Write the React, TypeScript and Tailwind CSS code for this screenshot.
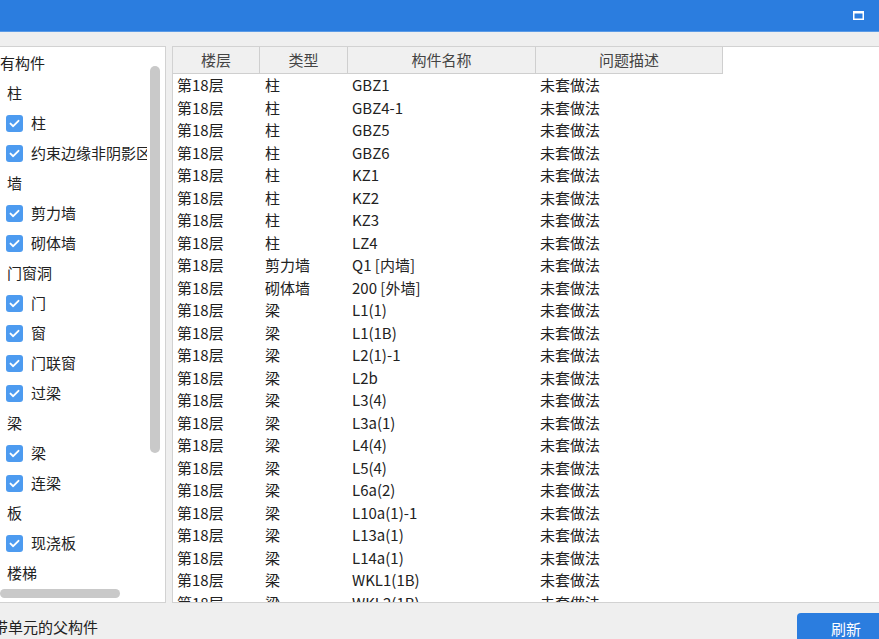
import React from "react";

type TreeItem = { label: string; checked?: boolean };

const treeItems: TreeItem[] = [
  { label: "有构件" },
  { label: "柱" },
  { label: "柱", checked: true },
  { label: "约束边缘非阴影区", checked: true },
  { label: "墙" },
  { label: "剪力墙", checked: true },
  { label: "砌体墙", checked: true },
  { label: "门窗洞" },
  { label: "门", checked: true },
  { label: "窗", checked: true },
  { label: "门联窗", checked: true },
  { label: "过梁", checked: true },
  { label: "梁" },
  { label: "梁", checked: true },
  { label: "连梁", checked: true },
  { label: "板" },
  { label: "现浇板", checked: true },
  { label: "楼梯" },
];

const rows: [string, string][] = [
  ["柱", "GBZ1"],
  ["柱", "GBZ4-1"],
  ["柱", "GBZ5"],
  ["柱", "GBZ6"],
  ["柱", "KZ1"],
  ["柱", "KZ2"],
  ["柱", "KZ3"],
  ["柱", "LZ4"],
  ["剪力墙", "Q1 [内墙]"],
  ["砌体墙", "200 [外墙]"],
  ["梁", "L1(1)"],
  ["梁", "L1(1B)"],
  ["梁", "L2(1)-1"],
  ["梁", "L2b"],
  ["梁", "L3(4)"],
  ["梁", "L3a(1)"],
  ["梁", "L4(4)"],
  ["梁", "L5(4)"],
  ["梁", "L6a(2)"],
  ["梁", "L10a(1)-1"],
  ["梁", "L13a(1)"],
  ["梁", "L14a(1)"],
  ["梁", "WKL1(1B)"],
  ["梁", "WKL2(1B)"],
];

const Check = () => (
  <span className="w-[17px] h-[17px] rounded-[3px] bg-[#4d9bf0] flex items-center justify-center shrink-0">
    <svg width="11" height="9" viewBox="0 0 11 9">
      <path d="M1.5 4.6 L4.2 7.2 L9.5 1.8" fill="none" stroke="#fff" strokeWidth="1.9" strokeLinecap="round" strokeLinejoin="round" />
    </svg>
  </span>
);

const App = () => {
  return (
    <div className="w-[879px] h-[639px] overflow-hidden flex flex-col bg-[#efefef] text-[15px] text-[#222] font-['Noto_Sans_CJK_SC','Microsoft_YaHei',sans-serif]">
      <div className="h-[32px] bg-[#2b7ddf] flex items-center justify-end pr-[15px] border-b border-[#5b9be6] shrink-0">
        <svg width="11" height="9" viewBox="0 0 11 9">
          <rect x="0.75" y="0.75" width="9.5" height="7.5" fill="none" stroke="#fff" strokeWidth="1.5" />
          <rect x="0.5" y="0.5" width="10" height="2" fill="#fff" />
        </svg>
      </div>

      <div className="flex mt-[14px] h-[557px] shrink-0">
        <div className="relative w-[166px] bg-white border-t border-r border-b border-[#d2d2d2] overflow-hidden">
          <div className="w-[147px] overflow-hidden pt-[1px]">
            {treeItems.map((it, i) => (
              <div key={i} className="h-[30px] flex items-center whitespace-nowrap">
                {it.checked ? (
                  <div className="flex items-center pl-[6px] gap-[8px]">
                    <Check />
                    <span>{it.label}</span>
                  </div>
                ) : (
                  <span className={i === 0 ? "pl-0" : "pl-[7px]"}>{it.label}</span>
                )}
              </div>
            ))}
          </div>
          <div className="absolute left-[150px] top-[19px] w-[10px] h-[387px] rounded-full bg-[#c9c9c9]" />
          <div className="absolute left-0 bottom-[4px] w-[120px] h-[9px] rounded-full bg-[#c9c9c9]" />
        </div>

        <div className="ml-[6px] flex-1 bg-white border-l border-t border-b border-[#d2d2d2] overflow-hidden">
          <div className="grid grid-cols-[87px_88px_188px_187px] h-[27px]">
            {["楼层", "类型", "构件名称", "问题描述"].map((h) => (
              <div key={h} className="bg-[#f0f0f0] border-r border-b border-[#cfcfcf] flex items-center justify-center text-[#444]">
                {h}
              </div>
            ))}
          </div>
          <div>
            {rows.map(([type, name], i) => (
              <div key={i} className="grid grid-cols-[87px_88px_188px_187px] h-[22.5px] items-center whitespace-nowrap">
                <span className="pl-[4px]">第18层</span>
                <span className="pl-[5px]">{type}</span>
                <span className="pl-[4px]">{name}</span>
                <span className="pl-[4px]">未套做法</span>
              </div>
            ))}
          </div>
        </div>
      </div>

      <div className="flex-1 flex justify-between">
        <div className="pt-[13px] overflow-hidden whitespace-nowrap">
          <span className="-ml-[7px] inline-block">带单元的父构件</span>
        </div>
        <div className="mt-[10px] w-[82px] h-[32px] bg-[#2b7ddf] rounded-tl-[4px] flex items-center justify-center pl-[16px] text-white">
          刷新
        </div>
      </div>
    </div>
  );
};

export default App;
